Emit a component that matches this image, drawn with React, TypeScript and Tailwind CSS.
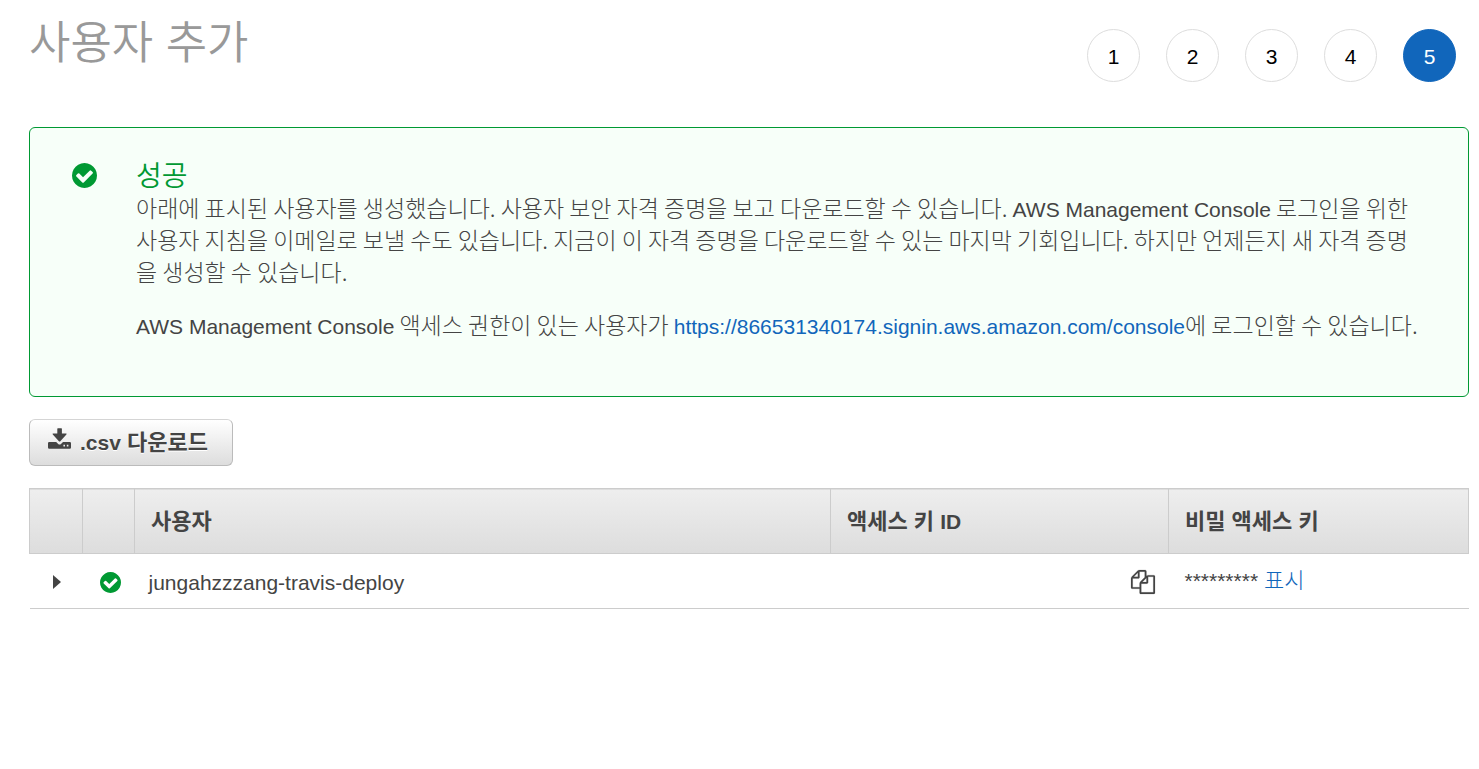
import React, { useState } from 'react';

interface IconProps {
  className?: string;
}

interface UserRow {
  name: string;
  accessKeyId: string;
  secret: string;
}

const STEPS = [1, 2, 3, 4, 5];
const SIGNIN_URL = 'https://866531340174.signin.aws.amazon.com/console';

const users: UserRow[] = [
  { name: 'jungahzzzang-travis-deploy', accessKeyId: '', secret: '' },
];

const CheckCircleIcon: React.FC<IconProps> = ({ className }) => (
  <svg viewBox="128 128 1536 1536" fill="currentColor" className={className} aria-hidden="true">
    <path d="M1412 734q0-28-18-46l-91-90q-19-19-45-19t-45 19l-408 407-226-226q-19-19-45-19t-45 19l-91 90q-18 18-18 46 0 27 18 45l362 362q19 19 45 19 27 0 46-19l543-543q18-18 18-45zm252 162q0 209-103 385.5t-279.5 279.5-385.5 103-385.5-103-279.5-279.5-103-385.5 103-385.5 279.5-279.5 385.5-103 385.5 103 279.5 279.5 103 385.5z" />
  </svg>
);

const DownloadIcon: React.FC<IconProps> = ({ className }) => (
  <svg viewBox="0 0 23 21" fill="currentColor" className={className} aria-hidden="true">
    <path d="M9.3 0.8Q9.3 0.2 9.9 0.2H13.3Q13.9 0.2 13.9 0.8V5.6H18Q19.2 5.6 18.4 6.6L12.3 13.2Q11.6 13.9 10.9 13.2L4.8 6.6Q4 5.6 5.2 5.6H9.3Z" />
    <path
      fillRule="evenodd"
      d="M1.2 14H8.2L10.2 15.9Q11.6 17 13 15.9L15 14H21.8Q23 14 23 15.2V19.6Q23 20.8 21.8 20.8H1.2Q0 20.8 0 19.6V15.2Q0 14 1.2 14ZM15.4 16.8V18.4H17V16.8ZM18.8 16.8V18.4H20.4V16.8Z"
    />
  </svg>
);

const CopyIcon: React.FC<IconProps> = ({ className }) => (
  <svg viewBox="0 0 1792 1792" fill="currentColor" stroke="currentColor" strokeWidth="12" className={className} aria-hidden="true">
    <path d="M1696 384q40 0 68 28t28 68v1216q0 40-28 68t-68 28h-960q-40 0-68-28t-28-68v-288h-544q-40 0-68-28t-28-68v-672q0-40 20-88t48-76l408-408q28-28 76-48t88-20h416q40 0 68 28t28 68v328q68-40 128-40h416zm-544 213l-299 299h299v-299zm-640-384l-299 299h299v-299zm196 647l316-316v-416h-384v416q0 40-28 68t-68 28h-416v640h512v-256q0-40 20-88t48-76zm956 804v-1152h-384v416q0 40-28 68t-68 28h-416v640h896z" />
  </svg>
);

const Latin: React.FC<{ children: React.ReactNode }> = ({ children }) => (
  <span className="font-['Liberation_Sans',sans-serif] text-[21px] leading-none">{children}</span>
);

const App: React.FC = () => {
  const [currentStep] = useState(5);
  const [expanded, setExpanded] = useState(false);

  return (
    <div className="min-h-screen bg-white pl-[29px] pr-2.5 font-['Liberation_Sans','Noto_Sans_CJK_KR',sans-serif] text-[#444444]">
      <header className="flex items-start justify-between pr-[13px]">
        <h1 className="pt-3.5 text-[45px] font-[350] leading-[60px] text-[#999999]">사용자 추가</h1>
        <ol className="flex gap-[26px] pt-[29px]">
          {STEPS.map(step => (
            <li
              key={step}
              className={`flex size-[53px] items-center justify-center rounded-full border pt-0.5 text-[21px] ${
                step === currentStep
                  ? 'border-[#1166bb] bg-[#1166bb] text-white'
                  : 'border-[#dddddd] bg-white text-black'
              }`}
            >
              {step}
            </li>
          ))}
        </ol>
      </header>

      <section className="mt-[45px] flex rounded-md border border-[#009933] bg-[#f7fff9] pb-14 pl-[42px] pr-12 pt-[29px]">
        <CheckCircleIcon className="mt-1.5 size-[25px] shrink-0 text-[#009933]" />
        <div className="ml-[39px] font-['Noto_Sans_CJK_KR',sans-serif]">
          <h2 className="text-[28px] font-[350] leading-[34px] text-[#009933]">성공</h2>
          <p className="text-[23px] font-light leading-8">
            아래에 표시된 사용자를 생성했습니다. 사용자 보안 자격 증명을 보고 다운로드할 수 있습니다.{' '}
            <Latin>AWS Management Console</Latin> 로그인을 위한 사용자 지침을 이메일로 보낼 수도 있습니다. 지금이 이
            자격 증명을 다운로드할 수 있는 마지막 기회입니다. 하지만 언제든지 새 자격 증명을 생성할 수 있습니다.
          </p>
          <p className="mt-[21px] text-[23px] font-light leading-8">
            <Latin>AWS Management Console</Latin> 액세스 권한이 있는 사용자가{' '}
            <a href={SIGNIN_URL} className="text-[#1166bb] hover:underline"><Latin>{SIGNIN_URL}</Latin></a>에 로그인할 수
            있습니다.
          </p>
        </div>
      </section>

      <button
        type="button"
        className="mt-[22px] flex h-[47px] items-center rounded-md border border-[#bbbbbb] border-t-[#d5d5d5] bg-linear-to-b from-white to-[#dddddd] pl-[18px] pr-6 text-[22px] font-bold [text-shadow:0_1px_0_#ffffff]"
      >
        <DownloadIcon className="mb-2 mr-[9px] w-[23px]" />
        <span><Latin>.csv</Latin> 다운로드</span>
      </button>

      <table className="mt-[22px] w-full table-fixed border-collapse text-left">
        <colgroup>
          <col className="w-[53px]" />
          <col className="w-[52px]" />
          <col />
          <col className="w-[338px]" />
          <col className="w-[300px]" />
        </colgroup>
        <thead>
          <tr className="h-[65px] border border-[#cccccc] bg-linear-to-b from-[#eeeeee] to-[#dddddd] text-[22px]">
            <th className="border-r border-[#cccccc]" />
            <th className="border-r border-[#cccccc]" />
            <th className="border-r border-[#cccccc] px-4">사용자</th>
            <th className="border-r border-[#cccccc] px-4">액세스 키 <Latin>ID</Latin></th>
            <th className="px-4">비밀 액세스 키</th>
          </tr>
        </thead>
        <tbody>
          {users.map(user => (
            <tr key={user.name} className="h-[55px] border-b border-[#cccccc] text-[21px]">
              <td className="pt-0.5">
                <button
                  type="button"
                  aria-label="세부 정보"
                  aria-expanded={expanded}
                  onClick={() => setExpanded(!expanded)}
                  className="ml-[23px] block"
                >
                  <svg viewBox="0 0 8 14" fill="currentColor" className="h-3.5 w-2" aria-hidden="true">
                    <path d="M0 0L8 7L0 14Z" />
                  </svg>
                </button>
              </td>
              <td className="pt-0.5"><CheckCircleIcon className="ml-[17px] size-[21px] text-[#009933]" /></td>
              <td className="px-3.5 pt-1">{user.name}</td>
              <td className="px-3.5 pt-0.5">
                <div className="flex items-center justify-between">
                  <span>{user.accessKeyId}</span>
                  <button type="button" aria-label="복사">
                    <CopyIcon className="size-6 overflow-visible" />
                  </button>
                </div>
              </td>
              <td className="px-4 pb-0.5">
                {user.secret || '*********'}{' '}
                <a href="#show" className="text-[22px] font-light text-[#1166bb] hover:underline">표시</a>
              </td>
            </tr>
          ))}
        </tbody>
      </table>
    </div>
  );
};

export default App;
